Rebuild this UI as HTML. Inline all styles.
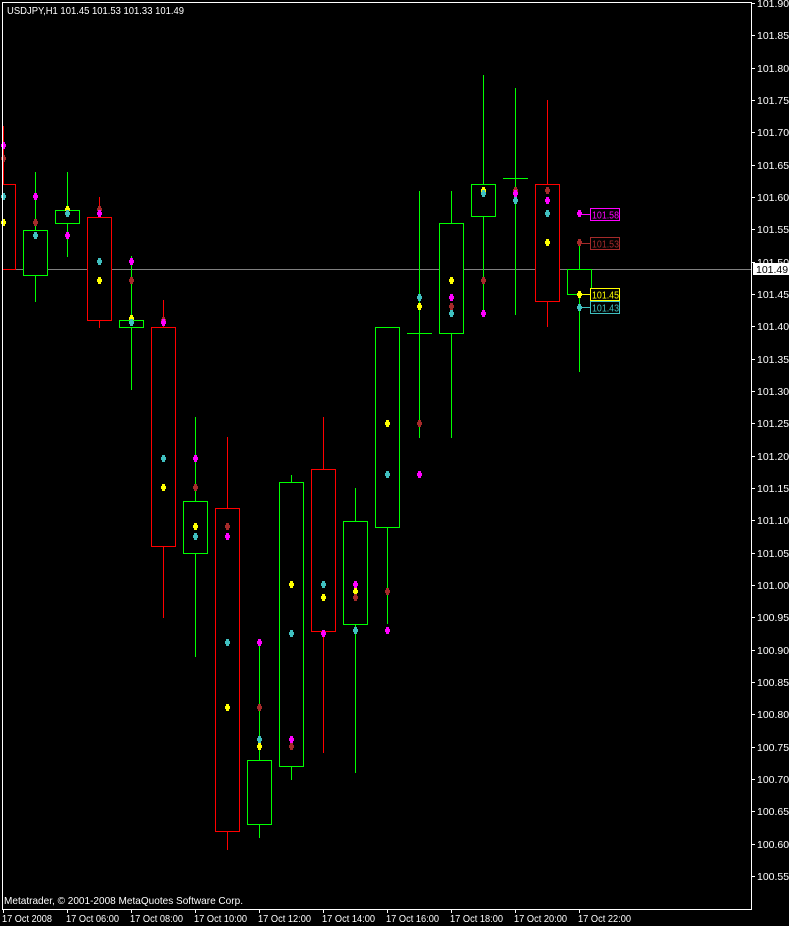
<!DOCTYPE html>
<html><head><meta charset="utf-8"><style>
html,body{margin:0;padding:0;background:#000;}
svg{display:block}
text{font-family:"Liberation Sans",sans-serif;font-size:10.5px;fill:#fff}
.b text{font-size:10px}
</style></head><body>
<svg id="s" width="789" height="926" viewBox="0 0 789 926" xmlns="http://www.w3.org/2000/svg" shape-rendering="crispEdges">
<rect width="789" height="926" fill="#000"/>
<line x1="2" y1="269.5" x2="751" y2="269.5" stroke="#808080"/>
<g id="c"></g>
<rect x="2.5" y="2.5" width="749" height="907" fill="none" stroke="#fff"/>
<g id="ticks"></g>
<text x="757" y="7">101.90</text>
<text x="757" y="39">101.85</text>
<text x="757" y="72">101.80</text>
<text x="757" y="104">101.75</text>
<text x="757" y="136">101.70</text>
<text x="757" y="169">101.65</text>
<text x="757" y="201">101.60</text>
<text x="757" y="233">101.55</text>
<text x="757" y="266">101.50</text>
<text x="757" y="298">101.45</text>
<text x="757" y="330">101.40</text>
<text x="757" y="363">101.35</text>
<text x="757" y="395">101.30</text>
<text x="757" y="427">101.25</text>
<text x="757" y="460">101.20</text>
<text x="757" y="492">101.15</text>
<text x="757" y="524">101.10</text>
<text x="757" y="557">101.05</text>
<text x="757" y="589">101.00</text>
<text x="757" y="621">100.95</text>
<text x="757" y="654">100.90</text>
<text x="757" y="686">100.85</text>
<text x="757" y="718">100.80</text>
<text x="757" y="751">100.75</text>
<text x="757" y="783">100.70</text>
<text x="757" y="815">100.65</text>
<text x="757" y="848">100.60</text>
<text x="757" y="880">100.55</text>
<rect x="753" y="263" width="36" height="12" fill="#fff"/>
<text x="756" y="273" style="fill:#000">101.49</text>
<text x="7" y="14" textLength="177" lengthAdjust="spacingAndGlyphs">USDJPY,H1  101.45 101.53 101.33 101.49</text>
<text x="4" y="904" textLength="239" lengthAdjust="spacingAndGlyphs">Metatrader, © 2001-2008 MetaQuotes Software Corp.</text>
<g class="t">
<text x="2" y="922" textLength="50" lengthAdjust="spacingAndGlyphs">17 Oct 2008</text>
<text x="66" y="922" textLength="53" lengthAdjust="spacingAndGlyphs">17 Oct 06:00</text>
<text x="130" y="922" textLength="53" lengthAdjust="spacingAndGlyphs">17 Oct 08:00</text>
<text x="194" y="922" textLength="53" lengthAdjust="spacingAndGlyphs">17 Oct 10:00</text>
<text x="258" y="922" textLength="53" lengthAdjust="spacingAndGlyphs">17 Oct 12:00</text>
<text x="322" y="922" textLength="53" lengthAdjust="spacingAndGlyphs">17 Oct 14:00</text>
<text x="386" y="922" textLength="53" lengthAdjust="spacingAndGlyphs">17 Oct 16:00</text>
<text x="450" y="922" textLength="53" lengthAdjust="spacingAndGlyphs">17 Oct 18:00</text>
<text x="514" y="922" textLength="53" lengthAdjust="spacingAndGlyphs">17 Oct 20:00</text>
<text x="578" y="922" textLength="53" lengthAdjust="spacingAndGlyphs">17 Oct 22:00</text>
</g>
<g class="b">
<line x1="579" y1="214.5" x2="590" y2="214.5" stroke="#ff00ff"/>
<rect x="590.5" y="208.5" width="29" height="12" fill="#000" stroke="#ff00ff"/>
<text x="592" y="218.5" textLength="27" lengthAdjust="spacingAndGlyphs" style="fill:#ff00ff">101.58</text>
<line x1="579" y1="243.5" x2="590" y2="243.5" stroke="#a52a2a"/>
<rect x="590.5" y="237.5" width="29" height="12" fill="#000" stroke="#a52a2a"/>
<text x="592" y="247.5" textLength="27" lengthAdjust="spacingAndGlyphs" style="fill:#a52a2a">101.53</text>
<line x1="579" y1="294.5" x2="590" y2="294.5" stroke="#ffff00"/>
<rect x="590.5" y="288.5" width="29" height="12" fill="#000" stroke="#ffff00"/>
<text x="592" y="298.5" textLength="27" lengthAdjust="spacingAndGlyphs" style="fill:#ffff00">101.45</text>
<line x1="579" y1="307.5" x2="590" y2="307.5" stroke="#40c0c0"/>
<rect x="590.5" y="301.5" width="29" height="12" fill="#000" stroke="#40c0c0"/>
<text x="592" y="311.5" textLength="27" lengthAdjust="spacingAndGlyphs" style="fill:#40c0c0">101.43</text>
</g>
</svg>
<script>
var NS="http://www.w3.org/2000/svg",g=document.getElementById("c"),t=document.getElementById("ticks");
function el(n,a,p){var e=document.createElementNS(NS,n);for(var k in a)e.setAttribute(k,a[k]);(p||g).appendChild(e);return e;}
for(var i=0;i<28;i++){var y=Math.round(3+i*32.33)+0.5;el("line",{x1:751,y1:y,x2:755,y2:y,stroke:"#fff"},t);}
for(var i=0;i<10;i++){var x=3+64*i+0.5;el("line",{x1:x,y1:909,x2:x,y2:913,stroke:"#fff"},t);}
var G="#00ff00",R="#ff0000";
var C=[[3,R,184,269,126,269],[35,G,230,275,172,302],[67,G,210,223,172,257],[99,R,217,320,197,328],
[131,G,320,327,256,390],[163,R,327,546,300,618],[195,G,501,553,417,657],[227,R,508,831,437,850],
[259,G,760,824,642,838],[291,G,482,766,475,780],[323,R,469,631,417,753],[355,G,521,624,488,773],
[387,G,327,527,327,624],[419,G,333,333,191,438,1],[451,G,223,333,191,438],[483,G,184,216,75,316],
[515,G,178,178,88,315,1],[547,R,184,301,100,327],[579,G,269,294,243,372]];
C.forEach(function(c){var x=c[0]+0.5;
el("line",{x1:x,y1:c[4],x2:x,y2:c[5],stroke:c[1]});
if(c[6]){el("line",{x1:c[0]-12,y1:c[2]+0.5,x2:c[0]+13,y2:c[2]+0.5,stroke:c[1]});}
else{var l=c[0]-12;if(c[0]==3){el("polyline",{points:"2,184.5 15.5,184.5 15.5,269.5 2,269.5",fill:"#000",stroke:c[1]});}
else el("rect",{x:l+0.5,y:c[2]+0.5,width:24,height:c[3]-c[2],fill:"#000",stroke:c[1]});}
});
var M="#ff00ff",B="#a52a2a",Y="#ffff00",K="#40c0c0";
var D=[[3,M,145],[3,B,158],[3,K,196],[3,Y,222],
[35,M,196],[35,B,222],[35,K,235],[67,Y,209],[67,K,213],[67,M,235],
[99,B,209],[99,M,213],[99,K,261],[99,Y,280],[131,M,261],[131,B,280],[131,Y,318],[131,K,322],
[163,B,320],[163,M,322],[163,K,458],[163,Y,487],[195,M,458],[195,B,487],[195,Y,526],[195,K,536],
[227,B,526],[227,M,536],[227,K,642],[227,Y,707],[259,M,642],[259,B,707],[259,K,739],[259,Y,746],
[291,Y,584],[291,K,633],[291,M,739],[291,B,746],[323,K,584],[323,Y,597],[323,M,633],
[355,M,584],[355,Y,591],[355,B,597],[355,K,630],[387,Y,423],[387,K,474],[387,B,591],[387,M,630],
[419,K,297],[419,Y,306],[419,B,423],[419,M,474],[451,Y,280],[451,M,297],[451,B,306],[451,K,313],
[483,Y,190],[483,K,193],[483,B,280],[483,M,313],[515,B,190],[515,M,193],[515,K,200],
[547,B,190],[547,M,200],[547,K,213],[547,Y,242],[579,M,213],[579,B,242],[579,Y,294],[579,K,307]];
D.forEach(function(d){var x=d[0],y=d[2];
el("polygon",{points:(x-1)+","+(y-3)+" "+(x+2)+","+(y-3)+" "+(x+2)+","+(y-1)+" "+(x+3)+","+(y-1)+" "+(x+3)+","+(y+2)+" "+(x+2)+","+(y+2)+" "+(x+2)+","+(y+4)+" "+(x-1)+","+(y+4)+" "+(x-1)+","+(y+2)+" "+(x-2)+","+(y+2)+" "+(x-2)+","+(y-1)+" "+(x-1)+","+(y-1),fill:d[1]});
});
</script>
</body></html>
